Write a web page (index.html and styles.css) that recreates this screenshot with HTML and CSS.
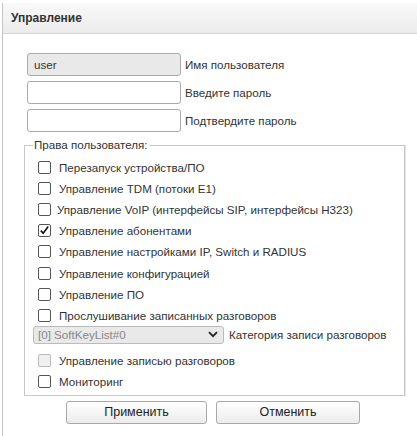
FILE: index.html
```html
<!DOCTYPE html>
<html>
<head>
<meta charset="utf-8">
<link rel="stylesheet" href="styles.css">
</head>
<body>
<div class="panel">
  <div class="panel-head">Управление</div>
  <div class="panel-body">
    <div class="field"><input class="txt txt-ro" type="text" value="user" readonly><span class="flabel">Имя пользователя</span></div>
    <div class="field"><input class="txt" type="password"><span class="flabel">Введите пароль</span></div>
    <div class="field"><input class="txt" type="password"><span class="flabel">Подтвердите пароль</span></div>
    <fieldset class="rights">
      <legend>Права пользователя:</legend>
      <label class="row"><input type="checkbox" class="cb"><span>Перезапуск устройства/ПО</span></label>
      <label class="row"><input type="checkbox" class="cb"><span>Управление TDM (потоки E1)</span></label>
      <label class="row tight"><input type="checkbox" class="cb"><span>Управление VoIP (интерфейсы SIP, интерфейсы H323)</span></label>
      <label class="row"><input type="checkbox" class="cb" checked><span>Управление абонентами</span></label>
      <label class="row"><input type="checkbox" class="cb"><span>Управление настройками IP, Switch и RADIUS</span></label>
      <label class="row"><input type="checkbox" class="cb"><span>Управление конфигурацией</span></label>
      <label class="row"><input type="checkbox" class="cb"><span>Управление ПО</span></label>
      <label class="row"><input type="checkbox" class="cb"><span>Прослушивание записанных разговоров</span></label>
      <div class="selrow">
        <div class="sel"><span>[0] SoftKeyList#0</span><svg class="chev" width="10" height="7" viewBox="0 0 10 7"><path d="M1 1.2 L5 5.2 L9 1.2" fill="none" stroke="#222" stroke-width="1.8"/></svg></div>
        <span class="sel-label">Категория записи разговоров</span>
      </div>
      <label class="row"><input type="checkbox" class="cb" disabled><span>Управление записью разговоров</span></label>
      <label class="row"><input type="checkbox" class="cb"><span>Мониторинг</span></label>
    </fieldset>
    <div class="buttons">
      <button class="btn btn-apply">Применить</button>
      <button class="btn btn-cancel">Отменить</button>
    </div>
  </div>
</div>
</body>
</html>
```

FILE: styles.css
```css
html, body {
  margin: 0;
  padding: 0;
  background: #fff;
}
body {
  font-family: "Liberation Sans", Arial, sans-serif;
  font-size: 11.6px;
  color: #333;
}
.panel {
  margin: 3px 0 0 2px;
  border-left: 1px solid #c4c4c4;
  height: 433px;
}
.panel-head {
  height: 30px;
  line-height: 30px;
  padding-left: 8px;
  font-weight: bold;
  font-size: 12px;
  color: #333;
  background: linear-gradient(#f9f9f9, #ececec);
  border-bottom: 1px solid #d6d6d6;
}
.panel-body {
  padding: 19px 0 0 21px;
}
.field {
  display: flex;
  align-items: center;
  margin-left: 3px;
  margin-bottom: 5px;
}
.txt {
  box-sizing: border-box;
  width: 154px;
  height: 23px;
  margin: 0;
  padding: 0 6px;
  border: 1px solid #aaa;
  border-radius: 3px;
  background: #fff;
  font-family: "Liberation Sans", Arial, sans-serif;
  font-size: 11.6px;
  color: #333;
  outline: none;
}
.txt-ro {
  background: #e9e9e9;
}
.flabel {
  margin-left: 4px;
}
.rights {
  box-sizing: border-box;
  width: 381px;
  margin: 6px 0 0 0;
  padding: 5px 0 3px 0;
  border: 1px solid #c8c8c8;
  box-shadow: 1px 0 0 #e4e4e4;
}
.rights legend {
  padding: 0 2px 0 1px;
  margin-left: 8px;
  line-height: 14px;
  color: #333;
}
.row {
  display: flex;
  align-items: center;
  height: 21.1px;
  padding-left: 13px;
}
.row.tight .cb {
  margin-right: 6px;
}
.cb {
  appearance: none;
  -webkit-appearance: none;
  box-sizing: border-box;
  width: 13px;
  height: 13px;
  margin: 0 8px 0 0;
  border: 1px solid #555;
  border-radius: 2px;
  background: #fff;
  flex: none;
}
.cb:checked {
  background: #fff url("data:image/svg+xml,%3Csvg xmlns='http://www.w3.org/2000/svg' width='11' height='11' viewBox='0 0 11 11'%3E%3Cpath d='M1.8 5.6 L4.2 8.2 L9.2 1.6' fill='none' stroke='%23111' stroke-width='1.6'/%3E%3C/svg%3E") no-repeat center;
}
.cb:disabled {
  border-color: #bbb;
  background: #f0f0f0;
}
.selrow {
  display: flex;
  align-items: center;
  height: 18px;
  padding-left: 8px;
  margin: 0 0 6px 0;
}
.sel {
  box-sizing: border-box;
  width: 191px;
  height: 18px;
  display: flex;
  align-items: center;
  justify-content: space-between;
  padding: 0 5px 0 4px;
  border: 1px solid #bbb;
  border-radius: 3px;
  background: #e9e9e9;
  color: #888;
}
.chev {
  display: block;
}
.sel-label {
  margin-left: 5px;
}
.buttons {
  display: flex;
  gap: 9px;
  margin: 5px 0 0 42px;
}
.btn {
  box-sizing: border-box;
  height: 23px;
  margin: 0;
  border: 1px solid #a8a8a8;
  border-radius: 3px;
  background: linear-gradient(#ffffff, #ececec);
  font-family: "Liberation Sans", Arial, sans-serif;
  font-size: 12.5px;
  color: #222;
}
.btn-apply { width: 141px; }
.btn-cancel { width: 144px; }
```
